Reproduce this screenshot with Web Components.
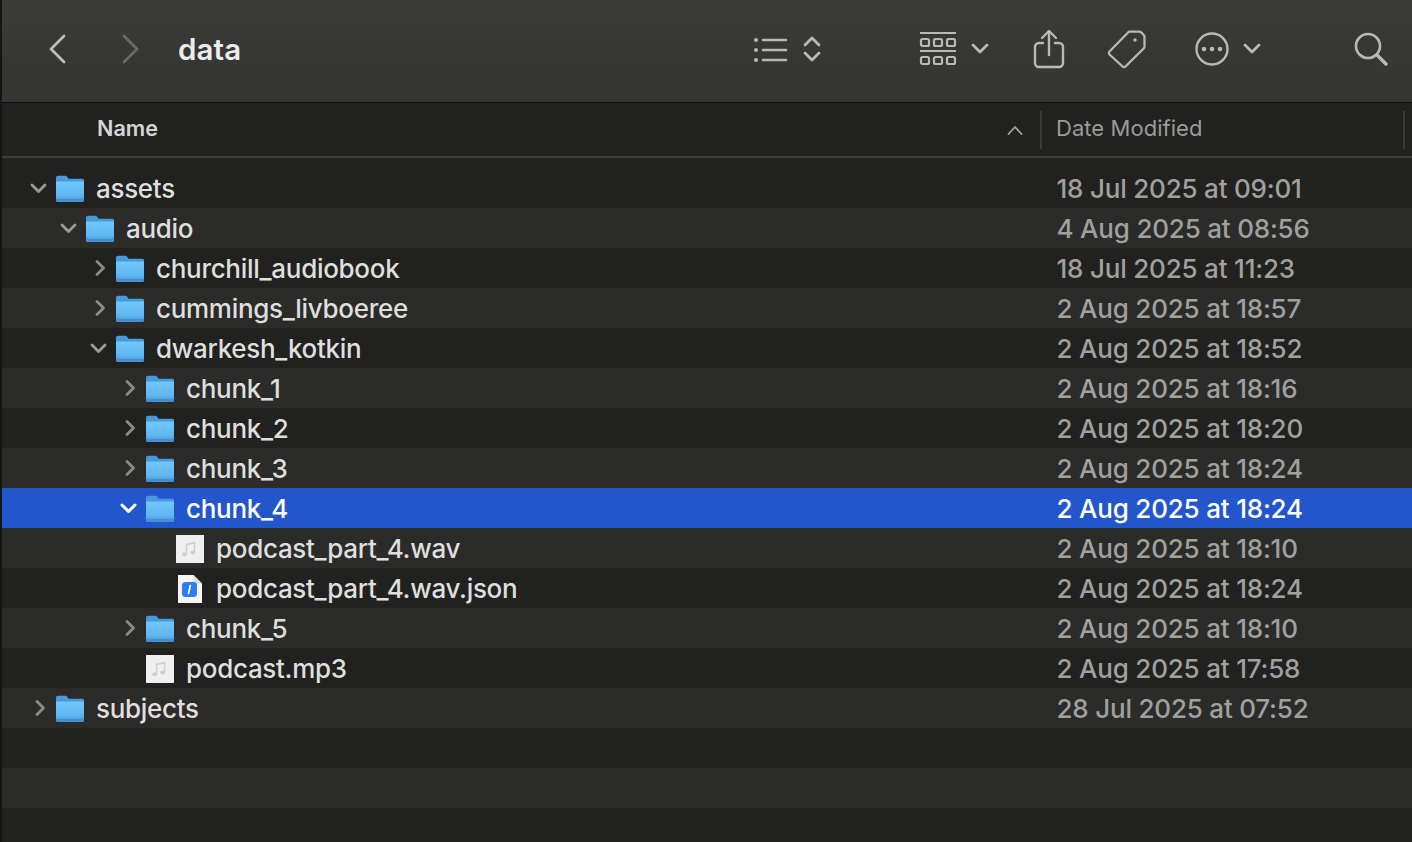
<!DOCTYPE html>
<html lang="en"><head><meta charset="utf-8"><title>data</title>
<style>
html,body{margin:0;height:100%;background:#212120;overflow:hidden}
body{font-family:Inter,"Liberation Sans",sans-serif}
</style></head><body>
<finder-window>
  <finder-toolbar slot="toolbar" title="data"></finder-toolbar>
  <finder-header slot="header"></finder-header>
  <finder-list slot="list">
    <finder-row level="0" kind="folder" state="open" name="assets" date="18 Jul 2025 at 09:01"></finder-row>
    <finder-row level="1" kind="folder" state="open" name="audio" date="4 Aug 2025 at 08:56"></finder-row>
    <finder-row level="2" kind="folder" state="closed" name="churchill_audiobook" date="18 Jul 2025 at 11:23"></finder-row>
    <finder-row level="2" kind="folder" state="closed" name="cummings_livboeree" date="2 Aug 2025 at 18:57"></finder-row>
    <finder-row level="2" kind="folder" state="open" name="dwarkesh_kotkin" date="2 Aug 2025 at 18:52"></finder-row>
    <finder-row level="3" kind="folder" state="closed" name="chunk_1" date="2 Aug 2025 at 18:16"></finder-row>
    <finder-row level="3" kind="folder" state="closed" name="chunk_2" date="2 Aug 2025 at 18:20"></finder-row>
    <finder-row level="3" kind="folder" state="closed" name="chunk_3" date="2 Aug 2025 at 18:24"></finder-row>
    <finder-row level="3" kind="folder" state="open" selected name="chunk_4" date="2 Aug 2025 at 18:24"></finder-row>
    <finder-row level="4" kind="audio" name="podcast_part_4.wav" date="2 Aug 2025 at 18:10"></finder-row>
    <finder-row level="4" kind="json" name="podcast_part_4.wav.json" date="2 Aug 2025 at 18:24"></finder-row>
    <finder-row level="3" kind="folder" state="closed" name="chunk_5" date="2 Aug 2025 at 18:10"></finder-row>
    <finder-row level="3" kind="audio" name="podcast.mp3" date="2 Aug 2025 at 17:58"></finder-row>
    <finder-row level="0" kind="folder" state="closed" name="subjects" date="28 Jul 2025 at 07:52"></finder-row>
    <finder-row></finder-row>
    <finder-row></finder-row>
    <finder-row></finder-row>
  </finder-list>
</finder-window>
<script>
const FONT='Inter,"Liberation Sans",sans-serif';
function shadow(el,html){el.attachShadow({mode:'open'}).innerHTML=html;}

class FinderWindow extends HTMLElement{constructor(){super();shadow(this,`<style>
:host{display:flex;flex-direction:column;width:1412px;height:842px;box-sizing:border-box;border-left:2px solid #141414;background:#212120;overflow:hidden;font-family:${FONT}}
</style><slot name="toolbar"></slot><slot name="header"></slot><slot name="list"></slot>`);}}

class FinderToolbar extends HTMLElement{constructor(){super();
const s='fill="none" stroke="currentColor" stroke-linecap="round" stroke-linejoin="round"';
shadow(this,`<style>
:host{display:flex;align-items:center;height:102px;box-sizing:border-box;flex:none;background:linear-gradient(#3b3b3a,#363635 60%);color:#b9b9b8;padding-bottom:4px}
svg{display:block;flex:none}
h1{margin:0 0 0 37px;font:600 29.500px/34px ${FONT};color:#ececec;width:575px;letter-spacing:.1px}
.fwd{color:#6a6a69;margin-left:51px}
.back{margin-left:44px}
</style>
<svg class="back" width="22" height="30" viewBox="0 0 22 30" ${s} stroke-width="2.8" style="color:#bdbdbc"><path d="M18 2 5 15l13 13"/></svg>
<svg class="fwd" width="22" height="30" viewBox="0 0 22 30" ${s} stroke-width="2.8"><path d="M5 2l13 13L5 28"/></svg>
<h1>${this.getAttribute('title')||''}</h1>
<svg width="36" height="28" viewBox="0 0 36 28" ${s} stroke-width="2.6"><path d="M10 5h23M10 15h23M10 25h23"/><g fill="currentColor" stroke="none"><circle cx="3" cy="5" r="2"/><circle cx="3" cy="15" r="2"/><circle cx="3" cy="25" r="2"/></g></svg>
<svg style="margin-left:13px" width="20" height="30" viewBox="0 0 20 30" ${s} stroke-width="2.8"><path d="M3 11l7-7 7 7M3 19l7 7 7-7"/></svg>
<svg style="margin-left:97px" width="38" height="36" viewBox="0 0 38 36" ${s} stroke-width="2.2"><path d="M1 2h36M1 20h36" stroke-linecap="butt"/><rect x="2" y="8" width="8" height="7" rx="1.5"/><rect x="15" y="8" width="8" height="7" rx="1.5"/><rect x="28" y="8" width="8" height="7" rx="1.5"/><rect x="2" y="26" width="8" height="7" rx="1.5"/><rect x="15" y="26" width="8" height="7" rx="1.5"/><rect x="28" y="26" width="8" height="7" rx="1.5"/></svg>
<svg style="margin-left:13px" width="20" height="14" viewBox="0 0 20 14" ${s} stroke-width="2.8"><path d="M3 3l7 7 7-7"/></svg>
<svg style="margin-left:43px" width="32" height="40" viewBox="0 0 32 40" ${s} stroke-width="2.4"><path d="M10 14H6a4 4 0 0 0-4 4v16a4 4 0 0 0 4 4h20a4 4 0 0 0 4-4V18a4 4 0 0 0-4-4h-4"/><path d="M16 26V3M9 9l7-7 7 7"/></svg>
<svg style="margin-left:42px" width="40" height="40" viewBox="0 0 40 40" ${s} stroke-width="2.3"><path d="M2.5 22.5 21 3.5a3 3 0 0 1 2-.9h9.2a3 3 0 0 1 2.2.9l2.3 2.5a3 3 0 0 1 .8 2v9.4a3 3 0 0 1-.9 2.1L18.5 37.5a2 2 0 0 1-2.9 0L2.5 25.5a2 2 0 0 1 0-3z"/><circle cx="28" cy="11" r="1.7" fill="currentColor" stroke="none"/></svg>
<svg style="margin-left:48px" width="34" height="34" viewBox="0 0 34 34" ${s} stroke-width="2.4"><circle cx="17" cy="17" r="15.5"/><g fill="currentColor" stroke="none"><circle cx="9" cy="17" r="2.3"/><circle cx="17" cy="17" r="2.3"/><circle cx="25" cy="17" r="2.3"/></g></svg>
<svg style="margin-left:13px" width="20" height="14" viewBox="0 0 20 14" ${s} stroke-width="2.8"><path d="M3 3l7 7 7-7"/></svg>
<svg style="margin-left:92px" width="36" height="34" viewBox="0 0 36 34" ${s} stroke-width="2.6"><circle cx="14" cy="14" r="12"/><path d="M23 23l9 9" stroke-width="3.4"/></svg>`);}}

class FinderHeader extends HTMLElement{constructor(){super();shadow(this,`<style>
:host{display:flex;align-items:center;flex:none;height:56px;box-sizing:border-box;border-top:1px solid #0c0c0c;border-bottom:2px solid #3b3b3a;background:#212120;font:22px/28px ${FONT};color:#9b9b9a}
.name{flex:none;width:1038px;box-sizing:border-box;padding-left:95px;display:flex;align-items:center;font-weight:600;color:#d4d4d3;padding-right:17px}
.name span{flex:1;font-size:21.6px;padding-bottom:3px}
.sep{flex:none;width:2px;height:38px;background:#3a3a39}
.date{flex:none;width:361px;padding:0 0 3px 14px;box-sizing:border-box;letter-spacing:.05px}
svg{display:block;margin-top:0}
</style>
<div class="name"><span>Name</span><svg width="16" height="10" viewBox="0 0 16 10" fill="none" stroke="#a5a5a4" stroke-width="1.8" stroke-linecap="round" stroke-linejoin="round"><path d="M1.500 9 8 2l6.500 7"/></svg></div>
<div class="sep"></div><div class="date">Date Modified</div><div class="sep"></div>`);}}

class FinderList extends HTMLElement{constructor(){super();shadow(this,`<style>
:host{display:block;flex:1;padding-top:10px;min-height:0;overflow:hidden;background:#212120}
::slotted(finder-row:nth-child(even)){background:#2b2b2a}
::slotted(finder-row[selected]){background:#2356cb}
</style><slot></slot>`);}}

const FOLDER=(id)=>`<svg width="30" height="28" viewBox="0 0 30 28"><defs><linearGradient id="${id}" x1="0" y1="0" x2="0" y2="1"><stop offset="0" stop-color="#70c8fa"/><stop offset="1" stop-color="#57aeef"/></linearGradient></defs>
<path d="M0 8V2.800a2 2 0 0 1 2-2h7.500a2 2 0 0 1 1.500.7L12.600 3.800H26.500A1.500 1.500 0 0 1 28 5.300V8z" fill="#4899dd"/>
<path d="M0 6.500h28v18.500a2 2 0 0 1-2 2H2a2 2 0 0 1-2-2z" fill="url(#${id})"/>
<rect x="0" y="21.500" width="28" height="1" fill="#5aa6e2"/><path d="M0 23.500h28v1.500a2 2 0 0 1-2 2H2a2 2 0 0 1-2-2z" fill="#4690d0"/></svg>`;
const NOTE=`<g fill="none" stroke="#cfcfcf" stroke-width="1.600"><path d="M10.500 19V9.500l8-1.700V17"/></g><ellipse cx="8.700" cy="19.300" rx="2.500" ry="2" fill="#cfcfcf"/><ellipse cx="16.700" cy="17.500" rx="2.500" ry="2" fill="#cfcfcf"/>`;
const AUDIO=`<svg width="30" height="28" viewBox="0 0 30 28"><rect x="0" y="0" width="28" height="28" fill="#efefef"/>${NOTE}</svg>`;
const JSONI=`<svg width="30" height="28" viewBox="0 0 30 28"><path d="M2 0h15.500L26 8.500V28H2z" fill="#f6f6f6"/><path d="M17.500 0 26 8.500h-8.500z" fill="#dcdcdc"/><rect x="6" y="7" width="15" height="15" rx="3.500" fill="#2f7cf0"/><path d="M12.500 18.500 14.300 10.500" stroke="#fff" stroke-width="1.700" stroke-linecap="round"/></svg>`;
let uid=0;
class FinderRow extends HTMLElement{constructor(){super();
const lvl=+this.getAttribute('level')||0,kind=this.getAttribute('kind'),state=this.getAttribute('state'),sel=this.hasAttribute('selected');
const name=this.getAttribute('name')||'',date=this.getAttribute('date')||'';
const col=sel?'#fff':(state==='open'?'#9a9a99':'#8a8a89');
const chev=state==='open'?`<path d="M3 5l6.500 6.500L16 5"/>`:state==='closed'?`<path d="M8 1.500 14.500 8 8 14.500"/>`:'';
const icon=kind==='folder'?FOLDER('f'+(uid++)):kind==='audio'?AUDIO:kind==='json'?JSONI:'';
shadow(this,`<style>
:host{display:flex;align-items:center;height:40px;color:${sel?'#fff':'#dfdfde'};font:450 26px/40px ${FONT};letter-spacing:-.3px}
.ind{flex:none;height:40px;display:flex;align-items:center;box-sizing:border-box}
.chev{flex:none;width:19px;margin-right:8px;margin-left:27px;display:block}
.icon{flex:none;width:30px;height:28px;margin-right:10px;display:block}
.name{flex:1;white-space:nowrap;min-width:0;padding-top:2px}
.date{flex:none;width:355.500px;padding-top:2px;color:${sel?'#fff':'#a0a09f'};letter-spacing:-.2px}
</style>${kind?`<div class="ind" style="padding-left:${lvl*30}px">
<svg class="chev" width="19" height="16" viewBox="0 0 19 16" fill="none" stroke="${col}" stroke-width="${sel?3:2.8}" stroke-linecap="round" stroke-linejoin="round">${chev}</svg>
<div class="icon">${icon}</div></div><div class="name">${name}</div><div class="date">${date}</div>`:''}`);}}

customElements.define('finder-window',FinderWindow);
customElements.define('finder-toolbar',FinderToolbar);
customElements.define('finder-header',FinderHeader);
customElements.define('finder-list',FinderList);
customElements.define('finder-row',FinderRow);
</script>
</body></html>
